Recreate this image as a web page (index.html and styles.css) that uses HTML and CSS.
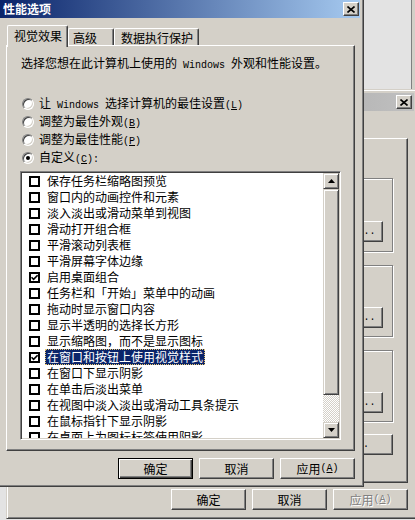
FILE: index.html
```html
<!DOCTYPE html>
<html lang="zh-CN">
<head>
<meta charset="utf-8">
<title>性能选项</title>
<link rel="stylesheet" href="styles.css">
</head>
<body>
<div class="strip"></div>

<div class="win bgwin">
  <div class="title inactive">
    <span class="ttext">系统属性</span>
    <span class="xbtn"><svg width="8" height="7" viewBox="0 0 8 7"><path d="M0.5 0.5L7.5 6.5M7.5 0.5L0.5 6.5" stroke="#000" stroke-width="1.6"/></svg></span>
  </div>
  <div class="bgpanel">
    <div class="grp g1"><div class="btn">设置<span class="en">(<u>S</u>)...</span></div></div>
    <div class="grp g2"><div class="btn">设置<span class="en">(<u>E</u>)...</span></div></div>
    <div class="grp g3"><div class="btn">设置<span class="en">(<u>T</u>)...</span></div></div>
    <div class="btn err">环境变量<span class="en">(<u>N</u>)...</span></div>
  </div>
  <div class="btnrow bgbtns">
    <div class="btn">确定</div>
    <div class="btn">取消</div>
    <div class="btn dis">应用<span class="en">(<u>A</u>)</span></div>
  </div>
</div>

<div class="win dlg">
  <div class="title">
    <span class="ttext">性能选项</span>
    <span class="xbtn"><svg width="8" height="7" viewBox="0 0 8 7"><path d="M0.5 0.5L7.5 6.5M7.5 0.5L0.5 6.5" stroke="#000" stroke-width="1.6"/></svg></span>
  </div>
  <div class="tabs">
    <div class="tab sel">视觉效果</div>
    <div class="tab t2">高级</div>
    <div class="tab t3">数据执行保护</div>
  </div>
  <div class="panel">
    <div class="desc">选择您想在此计算机上使用的<span class="en"> Windows </span>外观和性能设置。</div>
    <div class="radios">
      <div class="rrow"><span class="radio"></span><span>让<span class="en"> Windows </span>选择计算机的最佳设置<span class="en">(<u>L</u>)</span></span></div>
      <div class="rrow"><span class="radio"></span><span>调整为最佳外观<span class="en">(<u>B</u>)</span></span></div>
      <div class="rrow"><span class="radio"></span><span>调整为最佳性能<span class="en">(<u>P</u>)</span></span></div>
      <div class="rrow"><span class="radio on"></span><span>自定义<span class="en">(<u>C</u>):</span></span></div>
    </div>
    <div class="list">
      <div class="rows">
        <div class="row"><span class="cb"></span><span class="lbl">保存任务栏缩略图预览</span></div>
        <div class="row"><span class="cb"></span><span class="lbl">窗口内的动画控件和元素</span></div>
        <div class="row"><span class="cb"></span><span class="lbl">淡入淡出或滑动菜单到视图</span></div>
        <div class="row"><span class="cb"></span><span class="lbl">滑动打开组合框</span></div>
        <div class="row"><span class="cb"></span><span class="lbl">平滑滚动列表框</span></div>
        <div class="row"><span class="cb"></span><span class="lbl">平滑屏幕字体边缘</span></div>
        <div class="row"><span class="cb"><svg width="7" height="7" viewBox="0 0 7 7"><path d="M0.5 3.2L2.6 5.3L6.6 1.2" fill="none" stroke="#000" stroke-width="1.6"/></svg></span><span class="lbl">启用桌面组合</span></div>
        <div class="row"><span class="cb"></span><span class="lbl">任务栏和「开始」菜单中的动画</span></div>
        <div class="row"><span class="cb"></span><span class="lbl">拖动时显示窗口内容</span></div>
        <div class="row"><span class="cb"></span><span class="lbl">显示半透明的选择长方形</span></div>
        <div class="row"><span class="cb"></span><span class="lbl">显示缩略图，而不是显示图标</span></div>
        <div class="row"><span class="cb"><svg width="7" height="7" viewBox="0 0 7 7"><path d="M0.5 3.2L2.6 5.3L6.6 1.2" fill="none" stroke="#000" stroke-width="1.6"/></svg></span><span class="lbl hl">在窗口和按钮上使用视觉样式</span></div>
        <div class="row"><span class="cb"></span><span class="lbl">在窗口下显示阴影</span></div>
        <div class="row"><span class="cb"></span><span class="lbl">在单击后淡出菜单</span></div>
        <div class="row"><span class="cb"></span><span class="lbl">在视图中淡入淡出或滑动工具条提示</span></div>
        <div class="row"><span class="cb"></span><span class="lbl">在鼠标指针下显示阴影</span></div>
        <div class="row"><span class="cb"></span><span class="lbl">在桌面上为图标标签使用阴影</span></div>
      </div>
      <div class="sb">
        <div class="sbtn"><svg width="7" height="4" viewBox="0 0 7 4"><path d="M3.5 0L7 4H0z"/></svg></div>
        <div class="thumb"></div>
        <div class="track"></div>
        <div class="sbtn"><svg width="7" height="4" viewBox="0 0 7 4"><path d="M0 0H7L3.5 4z"/></svg></div>
      </div>
    </div>
  </div>
  <div class="btnrow">
    <div class="btn def">确定</div>
    <div class="btn">取消</div>
    <div class="btn">应用<span class="en">(<u>A</u>)</span></div>
  </div>
</div>
</body>
</html>
```
FILE: styles.css
```css
* { box-sizing: border-box; }
html, body { margin: 0; }
body {
  width: 415px;
  height: 520px;
  overflow: hidden;
  position: relative;
  background: #e3e3e3;
  font-family: "Noto Sans CJK SC", sans-serif;
  font-size: 12px;
  line-height: 14px;
  color: #000;
}
.en {
  font-family: "Liberation Mono", monospace;
  font-size: 10px;
  white-space: pre;
}
u { text-decoration: underline; text-underline-offset: 1px; }

.strip {
  position: absolute;
  left: 411px;
  top: 0;
  width: 10px;
  height: 90px;
  border-left: 1px solid #808080;
  background: #d4d0c8;
}

.win {
  position: absolute;
  background: #d4d0c8;
  border: 1px solid;
  border-color: #d4d0c8 #404040 #404040 #d4d0c8;
  box-shadow: inset 1px 1px #fff, inset -1px -1px #808080;
  padding: 3px;
  display: flex;
  flex-direction: column;
}
.dlg { left: -4px; top: -4px; width: 368px; height: 491px; z-index: 2; }
.bgwin { left: 6px; top: 89px; width: 412px; height: 430px; z-index: 1; }

.title {
  height: 18px;
  flex: none;
  display: flex;
  align-items: center;
  padding: 0 1px 0 3px;
  background: linear-gradient(to right, #0a246a, #a6caf0);
  color: #fff;
  font-weight: bold;
  white-space: nowrap;
}
.title.inactive {
  background: linear-gradient(to right, #808080, #c0c0c0);
  color: #d4d0c8;
  padding-right: 2px;
}
.ttext { flex: 1; }
.xbtn {
  width: 16px;
  height: 14px;
  flex: none;
  background: #d4d0c8;
  border: 1px solid;
  border-color: #fff #404040 #404040 #fff;
  box-shadow: inset -1px -1px #808080;
  display: flex;
  align-items: center;
  justify-content: center;
}

.tabs {
  display: flex;
  align-items: flex-end;
  height: 20px;
  margin-top: 7px;
  padding-left: 7px;
  position: relative;
  z-index: 2;
  flex: none;
}
.tab {
  background: #d4d0c8;
  border-top: 1px solid #fff;
  border-left: 1px solid #fff;
  border-right: 1px solid #404040;
  box-shadow: inset -1px 0 #808080;
  border-top-left-radius: 2px;
  border-top-right-radius: 2px;
  height: 17px;
  padding-top: 2px;
  white-space: nowrap;
}
.tab.sel { width: 61px; height: 22px; margin-bottom: -2px; padding-left: 6px; padding-top: 3px; }
.tab.t2 { width: 46px; padding-left: 4px; }
.tab.t3 { width: 85px; padding-left: 6px; }

.panel {
  margin-left: 6px;
  width: 349px;
  height: 406px;
  flex: none;
  border: 1px solid;
  border-color: #fff #404040 #404040 #fff;
  box-shadow: inset -1px -1px #808080;
  padding-left: 13px;
  position: relative;
  z-index: 1;
}
.desc { margin: 10px 0 0 1px; white-space: nowrap; }
.radios { margin-top: 22px; }
.rrow { height: 18px; display: flex; align-items: center; padding-left: 2px; white-space: nowrap; }
.radio {
  width: 12px;
  height: 12px;
  flex: none;
  border-radius: 50%;
  background: #fff;
  border: 1px solid;
  border-color: #808080 #fff #fff #808080;
  box-shadow: inset 1px 1px #404040, inset -1px -1px #d4d0c8;
  margin-right: 5px;
  position: relative;
}
.radio.on::after {
  content: "";
  position: absolute;
  left: 3px;
  top: 3px;
  width: 4px;
  height: 4px;
  border-radius: 50%;
  background: #000;
}

.list {
  margin-top: 4px;
  width: 321px;
  height: 269px;
  border: 1px solid;
  border-color: #808080 #fff #fff #808080;
  box-shadow: inset 1px 1px #404040, inset -1px -1px #d4d0c8;
  padding: 1px;
  display: flex;
  background: #fff;
}
.rows { flex: 1; overflow: hidden; background: #fff; }
.row { height: 16px; display: flex; align-items: center; white-space: nowrap; }
.cb {
  width: 11px;
  height: 11px;
  flex: none;
  border: 2px solid #000;
  background: #fff;
  margin-left: 7px;
  display: flex;
  align-items: center;
  justify-content: center;
}
.lbl { margin-left: 5px; padding: 0 2px; line-height: 16px; }
.lbl.hl {
  background: #0a246a;
  color: #fff;
  outline: 1px dotted #e8c870;
  outline-offset: -1px;
}

.sb { width: 16px; flex: none; display: flex; flex-direction: column; }
.sbtn, .thumb {
  background: #d4d0c8;
  border: 1px solid;
  border-color: #d4d0c8 #404040 #404040 #d4d0c8;
  box-shadow: inset 1px 1px #fff, inset -1px -1px #808080;
}
.sbtn { height: 16px; flex: none; display: flex; align-items: center; justify-content: center; }
.thumb { height: 206px; flex: none; }
.track {
  flex: 1;
  background: repeating-conic-gradient(#d4d0c8 0 25%, #fff 0 50%) 0 0 / 2px 2px;
}

.btnrow {
  display: flex;
  justify-content: flex-end;
  gap: 6px;
  padding-right: 5px;
  margin-top: 7px;
  flex: none;
}
.btn {
  width: 75px;
  height: 21px;
  flex: none;
  background: #d4d0c8;
  border: 1px solid;
  border-color: #fff #404040 #404040 #fff;
  box-shadow: inset -1px -1px #808080;
  display: flex;
  align-items: center;
  justify-content: center;
  white-space: nowrap;
}
.btn.def {
  border-color: #000;
  box-shadow: inset 1px 1px #fff, inset -1px -1px #404040, inset -2px -2px #808080;
}
.btn.dis { color: #808080; text-shadow: 1px 1px #fff; }

.bgpanel {
  margin: 27px 0 0 6px;
  width: 392px;
  height: 345px;
  flex: none;
  border: 1px solid;
  border-color: #fff #404040 #404040 #fff;
  box-shadow: inset -1px -1px #808080;
  display: flex;
  flex-direction: column;
  align-items: flex-end;
  padding: 39px 14px 0 0;
}
.grp {
  width: 200px;
  flex: none;
  border: 1px solid #808080;
  box-shadow: inset 1px 1px #fff, 1px 1px #fff;
  display: flex;
  justify-content: flex-end;
  align-items: flex-start;
  padding: 41px 9px 0 0;
}
.g1 { height: 74px; padding-top: 42px; }
.g2, .g3 { height: 72px; margin-top: 13px; }
.btn.err { margin-top: 12px; width: 120px; justify-content: flex-end; padding-right: 23px; }
.bgbtns { margin-top: 6px; padding-right: 6px; }
```
